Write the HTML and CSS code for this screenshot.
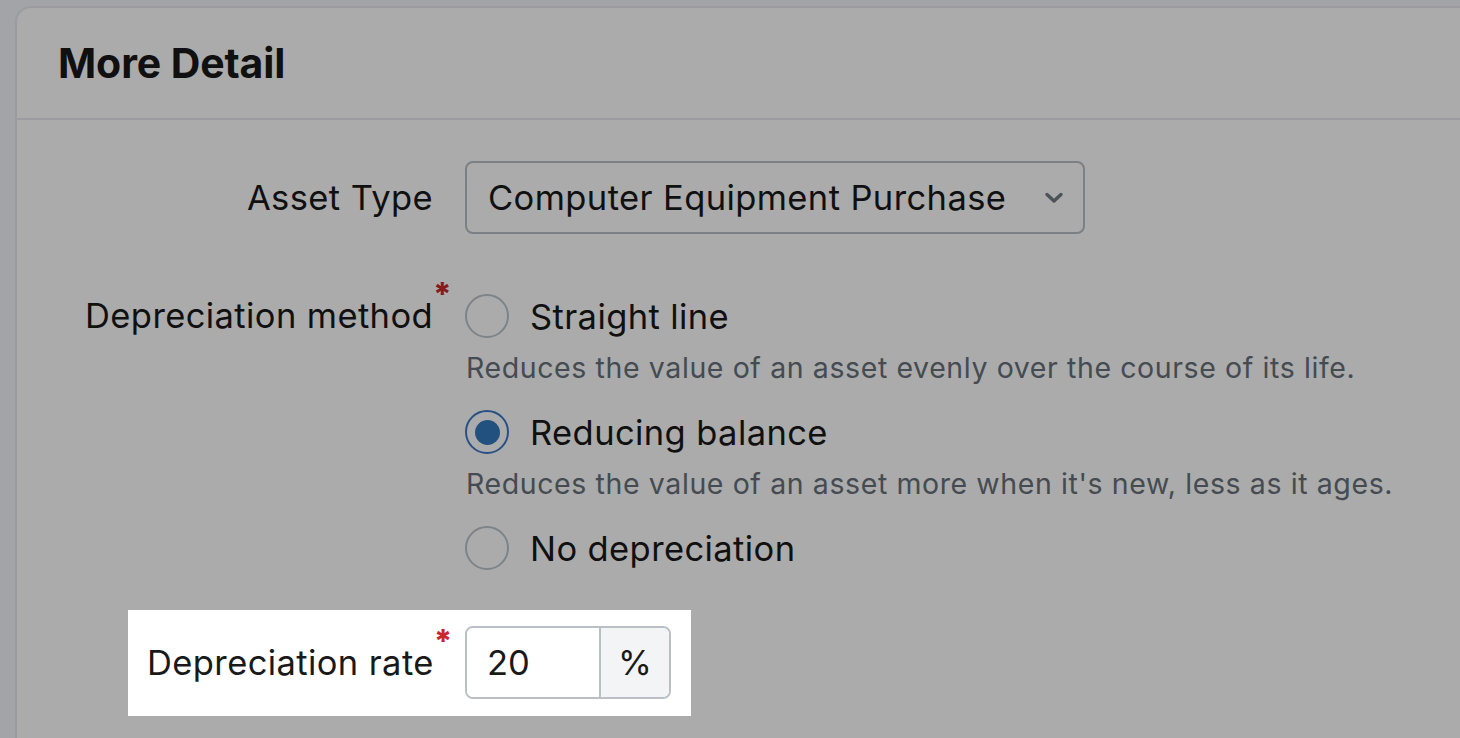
FILE: index.html
```html
<!DOCTYPE html>
<html lang="en">
<head>
  <meta charset="UTF-8">
  <meta name="viewport" content="width=device-width, initial-scale=1.0">
  <title>Fixed asset - More Detail</title>
  <link rel="stylesheet" href="styles.css">
</head>
<body>
  <div class="page">
    <section class="card">
      <header class="card-header">
        <h2>More Detail</h2>
      </header>

      <div class="card-body">
        <div class="field">
          <label class="field-label" for="assetType"><span>Asset Type</span></label>
          <div class="select-wrap">
            <select id="assetType" class="select">
              <option>Computer Equipment Purchase</option>
            </select>
            <svg class="chevron" viewBox="0 0 20 12" width="20" height="12" aria-hidden="true">
              <path d="M3 2.5 L10 9 L17 2.5" fill="none" stroke="currentColor" stroke-width="3.4" stroke-linecap="round" stroke-linejoin="round"/>
            </svg>
          </div>
        </div>

        <div class="field field-top">
          <div class="field-label"><span class="required">Depreciation method</span></div>
          <div class="options">
            <label class="option">
              <input type="radio" name="method" value="straight">
              <span class="radio"></span>
              <span>Straight line</span>
            </label>
            <p class="help">Reduces the value of an asset evenly over the course of its life.</p>

            <label class="option">
              <input type="radio" name="method" value="reducing" checked>
              <span class="radio"></span>
              <span>Reducing balance</span>
            </label>
            <p class="help">Reduces the value of an asset more when it's new, less as it ages.</p>

            <label class="option">
              <input type="radio" name="method" value="none">
              <span class="radio"></span>
              <span>No depreciation</span>
            </label>
          </div>
        </div>

        <div class="field field-spot">
          <label class="field-label" for="rate"><span class="required">Depreciation rate</span></label>
          <div class="input-group">
            <input id="rate" type="text" class="input" value="20">
            <span class="addon">%</span>
          </div>
        </div>
      </div>
    </section>

    <!-- dims everything except the highlighted field -->
    <div class="overlay"></div>
  </div>
</body>
</html>
```

FILE: styles.css
```css
html, body {
    margin: 0;
    padding: 0;
    height: 100%;
    overflow: hidden;
}
body {
    font-family: Inter, "Noto Sans", sans-serif;
    background: #f2f5fb;
    color: #191919;
}
.page {
    padding-top: 6px;
    height: 100%;
    box-sizing: border-box;
}
.card {
    margin: 0 -40px 0 15px;
    background: #ffffff;
    border: 2px solid #e8e8ef;
    border-radius: 16px 16px 0 0;
    min-height: 900px;
}
.card-header {
    height: 110px;
    display: flex;
    align-items: center;
    padding: 0 41px;
    border-bottom: 2px solid #e8e8ef;
}
.card-header h2 {
    margin: 0;
    font-size: 41px;
    font-weight: 700;
    letter-spacing: -0.1px;
}
.card-body {
    padding: 41px 0 0 16px;
}
.field {
    display: grid;
    grid-template-columns: 400px auto;
    column-gap: 32px;
    align-items: center;
    margin-bottom: 57px;
}
.field-top {
    align-items: start;
    margin-bottom: 37px;
}
.field-label {
    text-align: right;
    white-space: nowrap;
    font-size: 34.5px;
    letter-spacing: 0.4px;
    line-height: 50px;
}
.required {
    position: relative;
}
.required::after {
    content: "*";
    position: absolute;
    left: 100%;
    top: -25px;
    margin-left: 0;
    color: #c8282c;
    font-size: 32px;
    font-weight: 800;
}
.select-wrap {
    position: relative;
    width: 620px;
}
.select {
    appearance: none;
    -webkit-appearance: none;
    width: 100%;
    height: 73px;
    padding: 0 60px 0 21px;
    font-family: inherit;
    font-size: 34.5px;
    letter-spacing: 0.4px;
    color: #191919;
    background: #ffffff;
    border: 2px solid #b9bfc5;
    border-radius: 8px;
}
.chevron {
    position: absolute;
    right: 21px;
    top: 31px;
    color: #707d85;
}
.options {
    display: flex;
    flex-direction: column;
}
.option {
    display: flex;
    align-items: center;
    gap: 21px;
    height: 50px;
    font-size: 34.5px;
    letter-spacing: 0.4px;
}
.option input {
    display: none;
}
.radio {
    width: 44px;
    height: 44px;
    flex: none;
    box-sizing: border-box;
    border: 2px solid #bcc4cb;
    border-radius: 50%;
    display: flex;
    align-items: center;
    justify-content: center;
}
.option input:checked + .radio {
    border-color: #3b78c8;
}
.option input:checked + .radio::after {
    content: "";
    width: 25px;
    height: 25px;
    border-radius: 50%;
    background: #347abe;
}
.help {
    margin: 9px 0 21px 1px;
    font-size: 28.5px;
    letter-spacing: 0.6px;
    line-height: 36px;
    color: #67717a;
}
.field-spot {
    position: relative;
    z-index: 2;
    width: fit-content;
    margin-left: 95px;
    grid-template-columns: 286px auto;
    padding: 16px 20px 17px 19px;
    background: #ffffff;
}
.input-group {
    display: flex;
    height: 73px;
    border: 2px solid #b9bfc5;
    border-radius: 8px;
    box-sizing: border-box;
    overflow: hidden;
}
.input {
    width: 132px;
    box-sizing: border-box;
    padding: 0 20px;
    font-family: inherit;
    font-size: 34.5px;
    color: #191919;
    border: none;
    outline: none;
}
.addon {
    width: 68px;
    display: flex;
    align-items: center;
    justify-content: center;
    font-size: 34.5px;
    background: #f3f4f6;
    border-left: 2px solid #b9bfc5;
}
.overlay {
    position: fixed;
    inset: 0;
    z-index: 1;
    background: rgba(0, 0, 0, 0.33);
}
```
